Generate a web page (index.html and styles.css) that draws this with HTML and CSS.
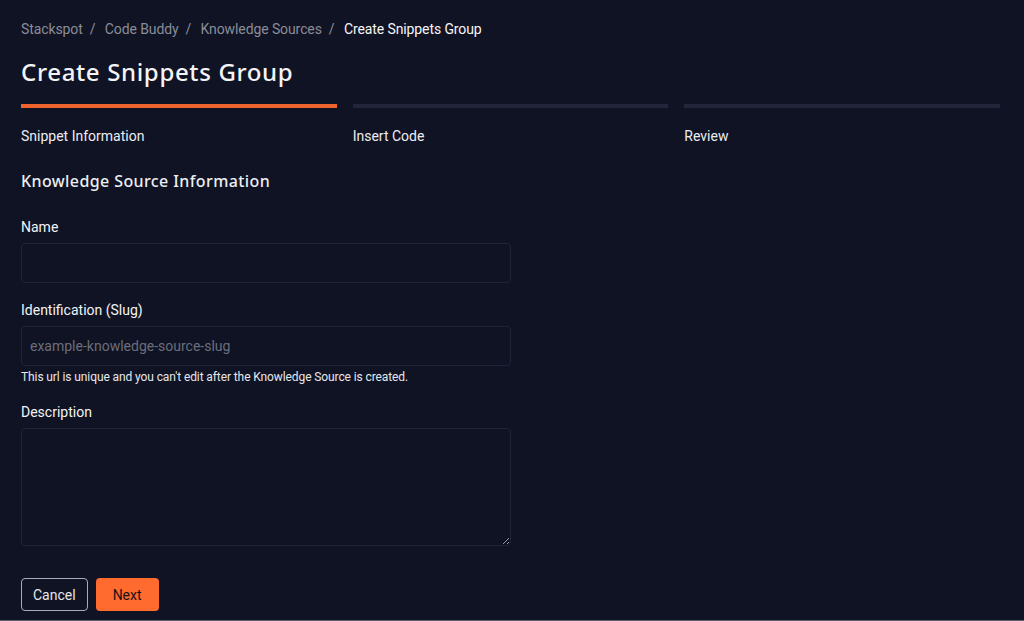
FILE: index.html
```html
<!DOCTYPE html>
<html lang="en">
<head>
<meta charset="utf-8" />
<title>Create Snippets Group</title>
<link rel="stylesheet" href="styles.css">
</head>
<body>

<main class="page">
	<nav class="crumbs">
		<a href="#">Stackspot</a><span class="sep">/</span>
		<a href="#">Code Buddy</a><span class="sep">/</span>
		<a href="#">Knowledge Sources</a><span class="sep">/</span>
		<span class="current">Create Snippets Group</span>
	</nav>

	<h1>Create Snippets Group</h1>

	<ol class="steps">
		<li class="active">Snippet Information</li>
		<li>Insert Code</li>
		<li>Review</li>
	</ol>

	<form class="form">
		<h2>Knowledge Source Information</h2>

		<label class="field">
			<span class="label">Name</span>
			<input type="text">
		</label>

		<label class="field">
			<span class="label">Identification (Slug)</span>
			<input type="text" placeholder="example-knowledge-source-slug">
			<span class="hint">This url is unique and you can't edit after the Knowledge Source is created.</span>
		</label>

		<label class="field">
			<span class="label">Description</span>
			<textarea></textarea>
		</label>

		<div class="actions">
			<button type="button" class="btn ghost">Cancel</button>
			<button type="button" class="btn primary">Next</button>
		</div>
	</form>
</main>

</body>
</html>
```

FILE: styles.css
```css
html {background: #101323;}
body {
	margin: 0;
	height: 620px;
	border-bottom: 1px solid #5d6170;
	background: #101323;
	color: #f2f3f5;
	font: 14px Roboto, "Liberation Sans", sans-serif;
	overflow: hidden;
}
.page {
	padding: 19px 24px 0 21px;
}

/* --------------------------------- */

.crumbs {
	height: 20px;
	line-height: 20px;
	font-size: 14px;
	letter-spacing: -0.1px;
	color: #8a8d99;
}
.crumbs a {
	color: #8a8d99;
	text-decoration: none;
}
.crumbs .sep {
	margin: 0 6px 0 7px;
}
.crumbs .current {color: #f6f6f8;}

h1 {
	margin: 18px 0 0;
	font: 500 24px/30px "Noto Sans", "Open Sans", sans-serif;
	letter-spacing: 0.65px;
	color: #f4f4f6;
}

/* --------------------------------- */

.steps {
	display: grid;
	grid-template-columns: repeat(3, 1fr);
	column-gap: 16px;
	list-style: none;
	margin: 17px 0 0;
	padding: 0;
}
.steps li {
	border-top: 4px solid #23263a;
	padding-top: 18px;
	line-height: 20px;
	color: #eceef2;
}
.steps li.active {
	border-top-color: #f0632c;
}

/* --------------------------------- */

.form {
	width: 490px;
	margin-top: 24px;
}
.form h2 {
	margin: 0 0 25px;
	font: 500 16px/22px "Noto Sans", "Open Sans", sans-serif;
	letter-spacing: 0.4px;
	color: #eceef2;
}
.field {
	display: flex;
	flex-direction: column;
	margin-bottom: 17px;
}
.field .label {
	line-height: 20px;
	margin-bottom: 6px;
}
.field input, .field textarea {
	box-sizing: border-box;
	width: 100%;
	height: 40px;
	padding: 0 8px;
	background: #101323;
	border: 1px solid #20233a;
	border-radius: 4px;
	color: #eceef2;
	font: 14px Roboto, "Liberation Sans", sans-serif;
	outline: none;
}
.field input::placeholder {color: #6b6e7b;}
.field textarea {
	height: 118px;
	padding: 9px;
	resize: vertical;
}
.field .hint {
	margin-top: 3px;
	margin-bottom: 0;
	font-size: 12px;
	line-height: 16px;
	letter-spacing: -0.1px;
	color: #e6e7eb;
}

/* --------------------------------- */

.actions {
	display: flex;
	gap: 8px;
	margin-top: 32px;
}
.btn {
	height: 33px;
	border-radius: 4px;
	font: 14px Roboto, "Liberation Sans", sans-serif;
}
.btn.ghost {
	padding: 0 11px;
	background: transparent;
	border: 1.5px solid #a9acb6;
	color: #e6e7eb;
}
.btn.primary {
	padding: 0 17px;
	background: #ff6a2e;
	border: none;
	color: #1a1212;
}
```
